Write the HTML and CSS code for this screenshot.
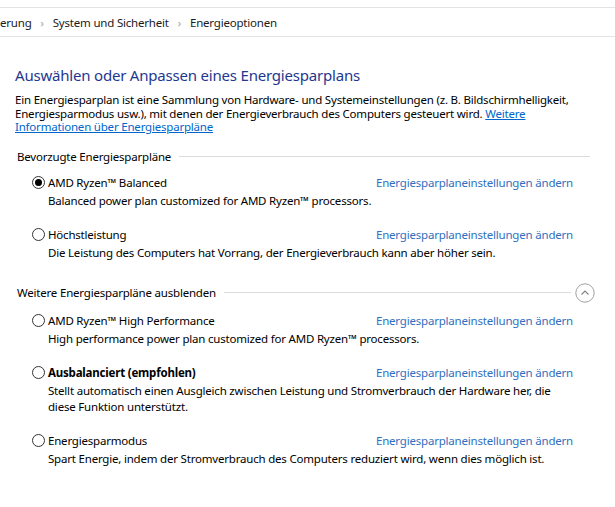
FILE: index.html
```html
<!DOCTYPE html>
<html lang="de">
<head>
    <meta charset="UTF-8">
    <title>Energieoptionen</title>
    <link rel="stylesheet" href="styles.css">
</head>
<body>
    <div class="crumbs">
        <span class="crumb">erung</span>
        <span class="sep">&#8250;</span>
        <span class="crumb">System und Sicherheit</span>
        <span class="sep">&#8250;</span>
        <span class="crumb">Energieoptionen</span>
    </div>

    <div class="content">
        <h1>Auswählen oder Anpassen eines Energiesparplans</h1>
        <p class="intro">Ein Energiesparplan ist eine Sammlung von Hardware- und Systemeinstellungen (z. B. Bildschirmhelligkeit,<br>Energiesparmodus usw.), mit denen der Energieverbrauch des Computers gesteuert wird. <a href="#">Weitere<br>Informationen über Energiesparpläne</a></p>

        <!-- preferred plans -->
        <div class="group-head">
            <span>Bevorzugte Energiesparpläne</span>
            <div class="rule"></div>
        </div>

        <div class="plans">
            <div class="plan">
                <div class="plan-row">
                    <span class="radio checked"></span>
                    <span class="plan-name">AMD Ryzen™ Balanced</span>
                    <a class="plan-link" href="#">Energiesparplaneinstellungen ändern</a>
                </div>
                <div class="plan-desc">Balanced power plan customized for AMD Ryzen™ processors.</div>
            </div>

            <div class="plan">
                <div class="plan-row">
                    <span class="radio"></span>
                    <span class="plan-name">Höchstleistung</span>
                    <a class="plan-link" href="#">Energiesparplaneinstellungen ändern</a>
                </div>
                <div class="plan-desc">Die Leistung des Computers hat Vorrang, der Energieverbrauch kann aber höher sein.</div>
            </div>
        </div>

        <!-- more plans -->
        <div class="group-head more">
            <span>Weitere Energiesparpläne ausblenden</span>
            <div class="rule"></div>
            <span class="toggle">
                <svg width="20" height="20" viewBox="0 0 20 20">
                    <circle cx="10" cy="10" r="9.2" fill="none" stroke="#a0a0a0" stroke-width="1"/>
                    <path d="M6.5 11.5 L10 8 L13.5 11.5" fill="none" stroke="#808080" stroke-width="1.1"/>
                </svg>
            </span>
        </div>

        <div class="plans">
            <div class="plan">
                <div class="plan-row">
                    <span class="radio"></span>
                    <span class="plan-name">AMD Ryzen™ High Performance</span>
                    <a class="plan-link" href="#">Energiesparplaneinstellungen ändern</a>
                </div>
                <div class="plan-desc">High performance power plan customized for AMD Ryzen™ processors.</div>
            </div>

            <div class="plan">
                <div class="plan-row">
                    <span class="radio"></span>
                    <span class="plan-name bold">Ausbalanciert (empfohlen)</span>
                    <a class="plan-link" href="#">Energiesparplaneinstellungen ändern</a>
                </div>
                <div class="plan-desc">Stellt automatisch einen Ausgleich zwischen Leistung und Stromverbrauch der Hardware her, die<br>diese Funktion unterstützt.</div>
            </div>

            <div class="plan">
                <div class="plan-row">
                    <span class="radio"></span>
                    <span class="plan-name">Energiesparmodus</span>
                    <a class="plan-link" href="#">Energiesparplaneinstellungen ändern</a>
                </div>
                <div class="plan-desc">Spart Energie, indem der Stromverbrauch des Computers reduziert wird, wenn dies möglich ist.</div>
            </div>
        </div>
    </div>
</body>
</html>
```

FILE: styles.css
```css
* {
    box-sizing: border-box;
}

body {
    margin: 0;
    padding: 0;
    background: #fff;
    color: #000;
    font-family: "Noto Sans", "Open Sans", sans-serif;
    font-size: 11.5px;
    letter-spacing: -0.2px;
}

.crumbs {
    margin-top: 7px;
    height: 30px;
    border-top: 1px solid #e3e3e3;
    border-bottom: 1px solid #e3e3e3;
    display: flex;
    align-items: center;
    white-space: nowrap;
    color: #1a1a1a;
}

.sep {
    color: #a0a0a0;
    font-size: 11px;
    margin: 0 9px;
}

.content {
    padding: 0 25px 0 15px;
}

h1 {
    margin: 28px 0 0;
    font-size: 15px;
    font-weight: normal;
    letter-spacing: -0.2px;
    color: #1e3890;
}

.intro {
    margin: 8px 0 0;
    line-height: 13.5px;
    white-space: nowrap;
}

.intro a {
    color: #0066cc;
}

.group-head {
    display: flex;
    align-items: center;
    margin: 14px 0 9px 2px;
    height: 18px;
}

.group-head .rule {
    flex: 1;
    height: 1px;
    background: #dcdcdc;
    margin-left: 8px;
}

.group-head.more {
    margin-top: 22px;
    height: 20px;
    margin-bottom: 10px;
}

.toggle {
    display: flex;
    margin-left: 4px;
    margin-right: -5px;
}

.plans {
    padding-right: 17px;
}

.plan {
    padding-left: 17px;
    margin-bottom: 18px;
}

.plan:last-child {
    margin-bottom: 0;
}

.plan-row {
    display: flex;
    align-items: center;
    height: 16px;
}

.radio {
    width: 13px;
    height: 13px;
    border: 1px solid #333;
    border-radius: 50%;
    margin-right: 3px;
    display: flex;
    align-items: center;
    justify-content: center;
}

.radio.checked::before {
    content: "";
    width: 7px;
    height: 7px;
    border-radius: 50%;
    background: #000;
}

.plan-name.bold {
    font-weight: bold;
}

.plan-link {
    margin-left: auto;
    color: #2f6fc0;
    text-decoration: none;
}

.plan-desc {
    padding-left: 16px;
    margin-top: 2px;
    line-height: 16px;
    white-space: nowrap;
}
```
